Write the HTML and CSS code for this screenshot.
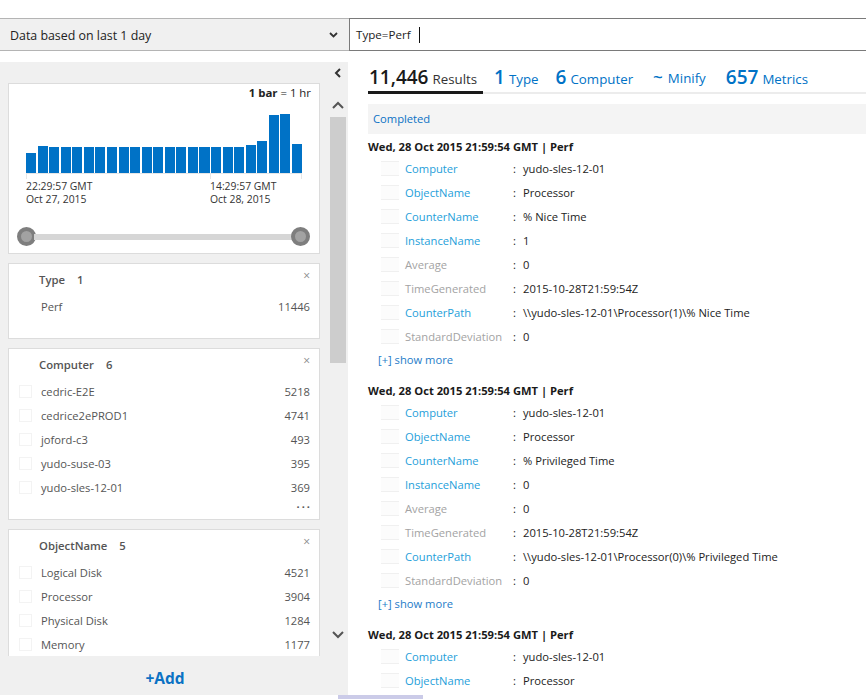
FILE: index.html
```html
<!DOCTYPE html>
<html>
<head>
<meta charset="utf-8">
<link rel="stylesheet" href="styles.css">
</head>
<body>
<div class="page">
  <div class="topstrip"></div>
  <div class="header">
    <div class="range">
      <span>Data based on last 1 day</span>
      <svg class="dd-chev" width="9" height="6" viewBox="0 0 9 6"><polyline points="1,1 4.5,4.5 8,1" fill="none" stroke="#333" stroke-width="1.8"/></svg>
    </div>
    <div class="search"><span>Type=Perf</span><span class="caret"></span></div>
  </div>

  <div class="main">
    <aside class="left">
      <div class="left-body">
        <div class="cards">
          <div class="card histo">
            <div class="legend"><b>1 bar</b> = 1 hr</div>
            <div class="bars">
              <span style="height:20px"></span><span style="height:27px"></span>
              <span style="height:26px"></span><span style="height:26px"></span><span style="height:26px"></span><span style="height:26px"></span>
              <span style="height:26px"></span><span style="height:26px"></span><span style="height:26px"></span><span style="height:26px"></span>
              <span style="height:26px"></span><span style="height:26px"></span><span style="height:26px"></span><span style="height:26px"></span>
              <span style="height:26px"></span><span style="height:26px"></span><span style="height:26px"></span><span style="height:26px"></span>
              <span style="height:26px"></span>
              <span style="height:28px"></span><span style="height:32px"></span><span style="height:58px"></span><span style="height:59px"></span><span style="height:29px"></span>
            </div>
            <div class="axis"><span class="tick"></span></div>
            <div class="axis-labels">
              <div class="al first">22:29:57 GMT<br>Oct 27, 2015</div>
              <div class="al">14:29:57 GMT<br>Oct 28, 2015</div>
            </div>
            <div class="slider">
              <span class="handle"></span><span class="track"></span><span class="handle"></span>
            </div>
          </div>

          <div class="card facet">
            <div class="f-title"><span>Type<span class="cnt">1</span></span><span class="x">×</span></div>
            <div class="f-row plain"><span class="f-name">Perf</span><span class="f-num">11446</span></div>
            <div class="f-more"></div>
          </div>

          <div class="card facet">
            <div class="f-title"><span>Computer<span class="cnt">6</span></span><span class="x">×</span></div>
            <div class="f-row"><span class="cb"></span><span class="f-name">cedric-E2E</span><span class="f-num">5218</span></div>
            <div class="f-row"><span class="cb"></span><span class="f-name">cedrice2ePROD1</span><span class="f-num">4741</span></div>
            <div class="f-row"><span class="cb"></span><span class="f-name">joford-c3</span><span class="f-num">493</span></div>
            <div class="f-row"><span class="cb"></span><span class="f-name">yudo-suse-03</span><span class="f-num">395</span></div>
            <div class="f-row"><span class="cb"></span><span class="f-name">yudo-sles-12-01</span><span class="f-num">369</span></div>
            <div class="f-more">...</div>
          </div>

          <div class="card facet">
            <div class="f-title"><span>ObjectName<span class="cnt">5</span></span><span class="x">×</span></div>
            <div class="f-row"><span class="cb"></span><span class="f-name">Logical Disk</span><span class="f-num">4521</span></div>
            <div class="f-row"><span class="cb"></span><span class="f-name">Processor</span><span class="f-num">3904</span></div>
            <div class="f-row"><span class="cb"></span><span class="f-name">Physical Disk</span><span class="f-num">1284</span></div>
            <div class="f-row"><span class="cb"></span><span class="f-name">Memory</span><span class="f-num">1177</span></div>
          </div>
        </div>

        <div class="scroll">
          <div class="collapse"><svg width="8" height="10" viewBox="0 0 8 10"><polyline points="6,1 2,5 6,9" fill="none" stroke="#333" stroke-width="2"/></svg></div>
          <div class="arrow up"><svg width="12" height="8" viewBox="0 0 12 8"><polyline points="1,7 6,2 11,7" fill="none" stroke="#555" stroke-width="2"/></svg></div>
          <div class="thumb"></div>
          <div class="spacer"></div>
          <div class="arrow down"><svg width="12" height="8" viewBox="0 0 12 8"><polyline points="1,1 6,6 11,1" fill="none" stroke="#555" stroke-width="2"/></svg></div>
        </div>
      </div>
      <div class="add">+Add</div>
    </aside>

    <section class="right">
      <div class="tabs">
        <div class="tab active"><span class="num dark">11,446</span><span class="lbl dark">Results</span></div>
        <div class="tab t-type"><span class="num">1</span><span class="lbl">Type</span></div>
        <div class="tab t-comp"><span class="num">6</span><span class="lbl">Computer</span></div>
        <div class="tab t-min"><span class="tilde">~</span><span class="lbl">Minify</span></div>
        <div class="tab t-met"><span class="num">657</span><span class="lbl">Metrics</span></div>
      </div>
      <div class="status">Completed</div>

      <div class="records">
        <div class="record">
          <div class="r-head">Wed, 28 Oct 2015 21:59:54 GMT | Perf</div>
          <div class="r-row"><span class="ic"></span><span class="k">Computer</span><span class="c">:</span><span class="v">yudo-sles-12-01</span></div>
          <div class="r-row"><span class="ic"></span><span class="k">ObjectName</span><span class="c">:</span><span class="v">Processor</span></div>
          <div class="r-row"><span class="ic"></span><span class="k">CounterName</span><span class="c">:</span><span class="v">% Nice Time</span></div>
          <div class="r-row"><span class="ic"></span><span class="k">InstanceName</span><span class="c">:</span><span class="v">1</span></div>
          <div class="r-row"><span class="ic"></span><span class="k muted">Average</span><span class="c">:</span><span class="v">0</span></div>
          <div class="r-row"><span class="ic"></span><span class="k muted">TimeGenerated</span><span class="c">:</span><span class="v">2015-10-28T21:59:54Z</span></div>
          <div class="r-row"><span class="ic"></span><span class="k">CounterPath</span><span class="c">:</span><span class="v">\\yudo-sles-12-01\Processor(1)\% Nice Time</span></div>
          <div class="r-row"><span class="ic"></span><span class="k muted">StandardDeviation</span><span class="c">:</span><span class="v">0</span></div>
          <div class="more">[+] show more</div>
        </div>
        <div class="record">
          <div class="r-head">Wed, 28 Oct 2015 21:59:54 GMT | Perf</div>
          <div class="r-row"><span class="ic"></span><span class="k">Computer</span><span class="c">:</span><span class="v">yudo-sles-12-01</span></div>
          <div class="r-row"><span class="ic"></span><span class="k">ObjectName</span><span class="c">:</span><span class="v">Processor</span></div>
          <div class="r-row"><span class="ic"></span><span class="k">CounterName</span><span class="c">:</span><span class="v">% Privileged Time</span></div>
          <div class="r-row"><span class="ic"></span><span class="k">InstanceName</span><span class="c">:</span><span class="v">0</span></div>
          <div class="r-row"><span class="ic"></span><span class="k muted">Average</span><span class="c">:</span><span class="v">0</span></div>
          <div class="r-row"><span class="ic"></span><span class="k muted">TimeGenerated</span><span class="c">:</span><span class="v">2015-10-28T21:59:54Z</span></div>
          <div class="r-row"><span class="ic"></span><span class="k">CounterPath</span><span class="c">:</span><span class="v">\\yudo-sles-12-01\Processor(0)\% Privileged Time</span></div>
          <div class="r-row"><span class="ic"></span><span class="k muted">StandardDeviation</span><span class="c">:</span><span class="v">0</span></div>
          <div class="more">[+] show more</div>
        </div>
        <div class="record">
          <div class="r-head">Wed, 28 Oct 2015 21:59:54 GMT | Perf</div>
          <div class="r-row"><span class="ic"></span><span class="k">Computer</span><span class="c">:</span><span class="v">yudo-sles-12-01</span></div>
          <div class="r-row"><span class="ic"></span><span class="k">ObjectName</span><span class="c">:</span><span class="v">Processor</span></div>
        </div>
      </div>
    </section>
  </div>
  <div class="hbar"></div>
</div>
</body>
</html>
```

FILE: styles.css
```css
* { box-sizing: border-box; }
html, body { margin: 0; padding: 0; background: #fff; }
body {
  font-family: "Open Sans", "Noto Sans", sans-serif;
  font-size: 11.2px;
  color: #222;
  overflow: hidden;
}
.page { width: 866px; height: 699px; overflow: hidden; display: flex; flex-direction: column; }
.topstrip { height: 18px; flex: none; }

.header { height: 33px; display: flex; flex: none; }
.range {
  width: 349px; flex: none;
  background: #f0f0f0;
  border-top: 1px solid #b4b4b4;
  border-bottom: 1px solid #b4b4b4;
  display: flex; align-items: center; justify-content: space-between;
  padding: 1px 11px 0 10px;
  font-size: 12.4px; color: #222;
}
.dd-chev { margin-top: 0; }
.search {
  flex: 1;
  border: 1px solid #7a7a7a;
  border-right: none;
  display: flex; align-items: center;
  padding-left: 6px;
  font-size: 11.6px; color: #222;
}
.caret { width: 1px; height: 16px; background: #111; margin-left: 8px; }

.main { display: flex; margin-top: 11px; height: 633px; flex: none; }

/* left panel */
.left { width: 348px; flex: none; background: #f0f0f0; display: flex; flex-direction: column; }
.left-body { height: 594px; display: flex; overflow: hidden; flex: none; }
.cards { width: 312px; margin-left: 8px; padding-top: 21px; display: flex; flex-direction: column; gap: 9px; flex: none; }
.card { background: #fff; border: 1px solid #dcdcdc; flex: none; }

.histo { height: 171px; }
.legend { text-align: right; padding: 2px 8px 0 0; line-height: 14px; font-size: 11.4px; color: #222; }
.legend b { font-weight: 700; }
.bars { margin: 13px 17px 0 17px; height: 60px; display: flex; align-items: flex-end; gap: 1.5px; }
.bars span { flex: 1; background: #0072c6; }
.axis { margin: 0 17px; height: 6px; border-top: 1px solid #e6e6e6; border-left: 1px solid #e6e6e6; border-right: 1px solid #e6e6e6; display: flex; }
.tick { width: 184px; border-right: 1px solid #e6e6e6; }
.axis-labels { display: flex; margin-left: 17px; margin-top: 1px; font-size: 10.4px; line-height: 13px; color: #333; }
.al.first { width: 184px; }
.slider { display: flex; align-items: center; margin: 21px 9px 0 8px; height: 19px; }
.handle { width: 19px; height: 19px; border-radius: 50%; background: #a2a2a2; border: 4px solid #7e7e7e; flex: none; }
.track { flex: 1; height: 6px; background: #d6d6d6; margin: 0 -2px; }

.facet { padding: 7px 9px 5px 0; }
.f-title { display: flex; justify-content: space-between; height: 18px; line-height: 18px; padding-left: 30px; font-weight: 600; color: #555; font-size: 11.3px; }
.cnt { margin-left: 12px; }
.x { font-weight: 400; color: #8a8a8a; font-size: 12px; line-height: 12px; margin-top: -1px; }
.f-title + .f-row { margin-top: 5px; }
.f-row { height: 24px; display: flex; align-items: center; color: #555; }
.cb { width: 13px; height: 13px; border: 1px solid #f3f3f3; margin-left: 10px; margin-right: 9px; flex: none; }
.f-row.plain .f-name { margin-left: 32px; }
.f-name { flex: 1; }
.f-num { color: #555; }
.f-more { height: 15px; text-align: right; line-height: 10px; font-size: 11px; letter-spacing: 2px; color: #555; font-weight: 700; margin-right: -2px; }

.scroll { width: 16px; margin-left: 10px; display: flex; flex-direction: column; align-items: center; flex: none; }
.collapse { height: 22px; display: flex; align-items: center; justify-content: center; }
.arrow { height: 18px; display: flex; align-items: center; justify-content: center; }
.arrow.up { margin-top: 12px; }
.thumb { width: 16px; height: 246px; background: #cdcdcd; margin-top: 3px; flex: none; }
.spacer { flex: 1; }
.arrow.down { margin-bottom: 12px; }

.add { height: 39px; display: flex; align-items: center; justify-content: center; color: #0b72c4; font-weight: 700; font-size: 15.5px; padding: 4px 18px 0 0; }

/* right pane */
.right { flex: 1; padding-left: 20px; overflow: hidden; }
.tabs { height: 32px; display: flex; border-bottom: 2px solid #ececec; }
.tab { display: flex; align-items: baseline; height: 32px; padding-top: 2px; color: #0072c6; flex: none; }
.tab.active { border-bottom: 3px solid #1a1a1a; margin-bottom: -2px; padding-left: 1px; padding-right: 6px; }
.num { font-size: 19px; font-weight: 600; line-height: 26px; }
.lbl { font-size: 13.3px; margin-left: 4px; }
.dark { color: #1a1a1a; }
.lbl.dark { color: #333; }
.t-type { margin-left: 11px; }
.t-comp { margin-left: 17px; }
.t-min { margin-left: 20px; }
.t-met { margin-left: 20px; }
.tilde { font-size: 17px; font-weight: 600; line-height: 26px; }
.t-min .lbl { margin-left: 5px; }

.status { margin-top: 10px; height: 30px; line-height: 30px; background: #f4f4f4; padding-left: 5px; color: #0a72c4; }
.records { margin-top: 2px; }
.record { margin-bottom: 9px; }
.r-head { height: 20px; line-height: 22px; font-weight: 700; font-size: 11.2px; color: #1a1a1a; }
.r-row { height: 24px; display: flex; align-items: center; }
.ic { width: 18px; height: 15px; margin-left: 13px; margin-right: 6px; border-top: 1px solid #f0f0f0; border-bottom: 1px solid #f0f0f0; background: #fcfcfc; flex: none; }
.k { width: 108px; color: #25a0da; flex: none; }
.k.muted { color: #a3a3a3; }
.c { width: 10px; flex: none; color: #222; }
.v { white-space: nowrap; color: #222; }
.more { height: 23px; line-height: 24px; padding-left: 10px; color: #1e7cc8; }

.hbar { margin-left: 338px; width: 85px; height: 4px; background: #cbcbe8; flex: none; }
```
